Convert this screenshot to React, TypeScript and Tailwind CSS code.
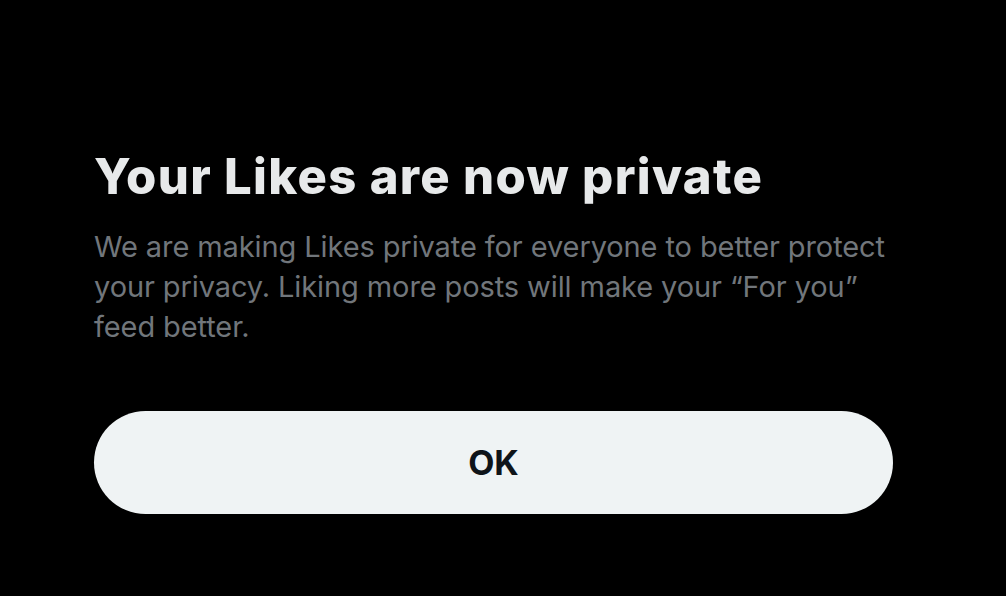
import React from 'react';

const App: React.FC = () => {
  return (
    <div className="w-full h-[596px] bg-black overflow-hidden" style={{ fontFamily: 'Inter, "Noto Sans", sans-serif' }}>
      <div className="pl-[94px] pt-[149px]">
        <h1 className="text-[49px] leading-[56px] font-extrabold text-[#e7e9ea] tracking-[1.3px]">
          Your Likes are now private
        </h1>
        <p className="mt-[22px] text-[29px] leading-[40px] text-[#71767b] tracking-[-0.1px] w-[800px]">
          We are making Likes private for everyone to better protect your privacy. Liking more posts will make your “For you” feed better.
        </p>
        <button className="mt-[64px] w-[799px] h-[103px] rounded-full bg-[#eff3f4] text-[#0f1419] text-[34px] font-bold">
          OK
        </button>
      </div>
    </div>
  );
};

export default App;
